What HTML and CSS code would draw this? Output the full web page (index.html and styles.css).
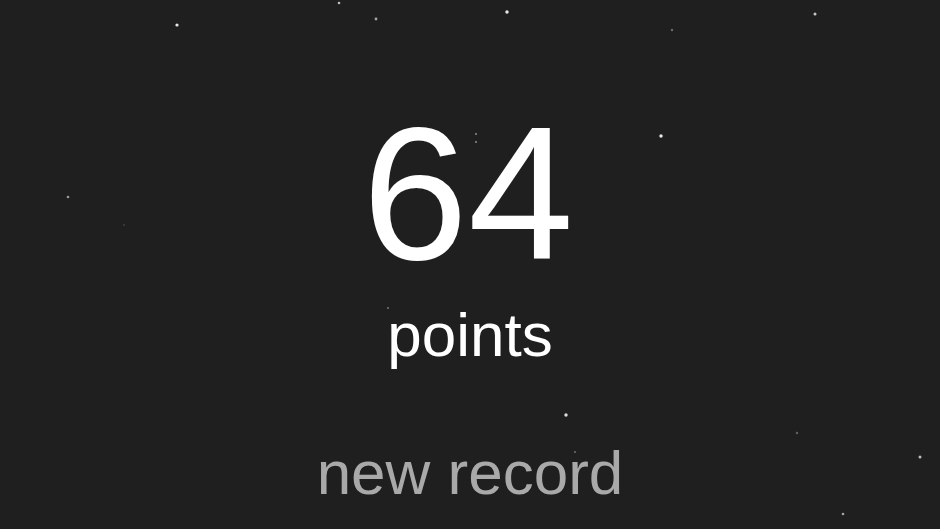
FILE: index.html
```html
<!DOCTYPE html>
<html lang="en">
<head>
  <meta charset="UTF-8">
  <meta name="viewport" content="width=device-width, initial-scale=1.0">
  <title>Game Over</title>
  <link rel="stylesheet" href="styles.css">
</head>
<body>

<svg class="stars" width="940" height="529" viewBox="0 0 940 529">
  <circle cx="177" cy="25" r="1.6" fill="#fff" opacity="0.9"/>
  <circle cx="339" cy="3" r="1.3" fill="#fff" opacity="0.7"/>
  <circle cx="376" cy="19" r="1.4" fill="#fff" opacity="0.6"/>
  <circle cx="507" cy="12" r="1.7" fill="#fff" opacity="0.9"/>
  <circle cx="672" cy="30" r="1.2" fill="#fff" opacity="0.35"/>
  <circle cx="815" cy="14" r="1.5" fill="#fff" opacity="0.75"/>
  <circle cx="476" cy="134" r="1" fill="#fff" opacity="0.5"/>
  <circle cx="476" cy="142" r="1" fill="#fff" opacity="0.5"/>
  <circle cx="661" cy="136" r="1.7" fill="#fff" opacity="0.9"/>
  <circle cx="68" cy="197" r="1.3" fill="#fff" opacity="0.55"/>
  <circle cx="124" cy="225" r="1" fill="#fff" opacity="0.15"/>
  <circle cx="388" cy="308" r="1" fill="#fff" opacity="0.4"/>
  <circle cx="566" cy="415" r="1.7" fill="#fff" opacity="0.85"/>
  <circle cx="797" cy="433" r="1.2" fill="#fff" opacity="0.3"/>
  <circle cx="920" cy="457" r="1.5" fill="#fff" opacity="0.7"/>
  <circle cx="843" cy="514" r="1.3" fill="#fff" opacity="0.6"/>
  <circle cx="575" cy="452" r="0.9" fill="#fff" opacity="0.4"/>
</svg>

<div class="result">
  <div class="score">64</div>
  <div class="label">points</div>
  <div class="record">new record</div>
</div>

</body>
</html>
```

FILE: styles.css
```css
body {
  margin: 0;
  height: 100vh;
  overflow: hidden;
  background-color: #1f1f1f;
  font-family: "Liberation Sans", Arial, sans-serif;
}
.stars {
  position: absolute;
  top: 0;
  left: 0;
}
.result {
  position: relative;
  display: flex;
  flex-direction: column;
  align-items: center;
  padding-top: 98px;
}
.score {
  font-size: 190px;
  line-height: 1;
  color: #ffffff;
  margin-left: -4px;
}
.label {
  margin-top: 16px;
  font-size: 62px;
  line-height: 1;
  color: #ffffff;
}
.record {
  margin-top: 76px;
  font-size: 62px;
  line-height: 1;
  color: #a9a9a9;
}
```
